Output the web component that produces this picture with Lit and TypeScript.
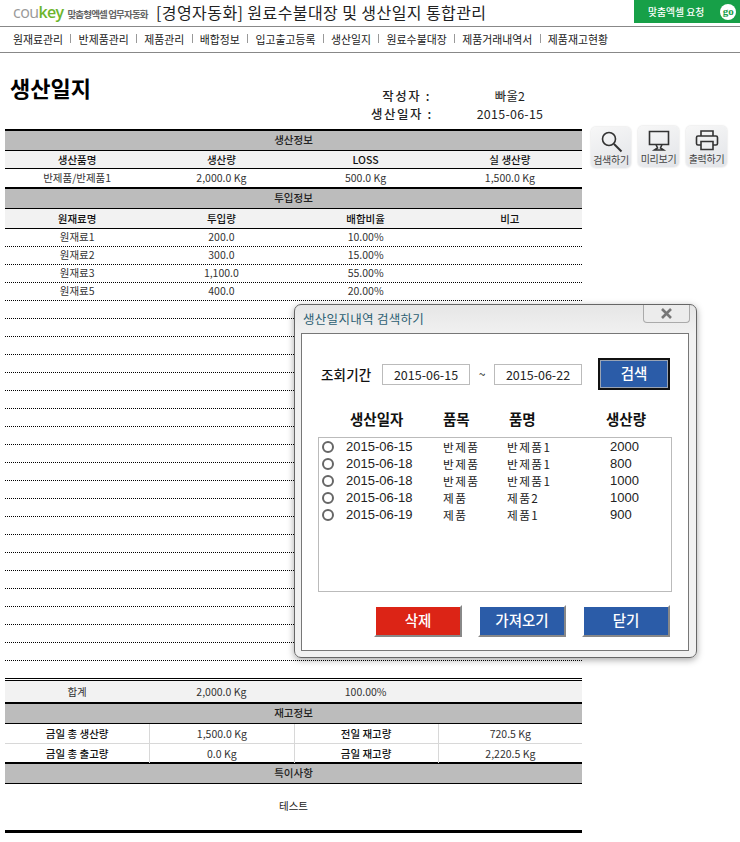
import { LitElement, html, css } from "lit";
import { customElement } from "lit/decorators.js";

const NAV = ["원재료관리","반제품관리","제품관리","배합정보","입고출고등록","생산일지","원료수불대장","제품거래내역서","제품재고현황"];
const MATS = [["원재료1","200.0","10.00%"],["원재료2","300.0","15.00%"],["원재료3","1,100.0","55.00%"],["원재료5","400.0","20.00%"]];
const LIST = [
  ["2015-06-15","반제품","반제품1","2000"],
  ["2015-06-18","반제품","반제품1","800"],
  ["2015-06-18","반제품","반제품1","1000"],
  ["2015-06-18","제품","제품2","1000"],
  ["2015-06-19","제품","제품1","900"],
];

@customElement("app-root")
export class AppRoot extends LitElement {
  static styles = css`
    :host { display:block; position:relative; width:740px; height:842px; overflow:hidden; background:#fff; color:#111;
      font-family:"Noto Sans CJK KR","Liberation Sans",sans-serif; font-size:10px; }
    * { box-sizing:border-box; }
    .top { height:27px; border-bottom:1px solid #888; display:flex; align-items:flex-start; }
    .logo { display:flex; align-items:baseline; width:143px; margin-left:13px; height:24px; padding-top:1px; white-space:nowrap; }
    .cou { font:500 16px/22px "Open Sans","Liberation Sans",sans-serif; letter-spacing:-.5px; color:#999; }
    .key { font:600 16px/22px "Open Sans","Liberation Sans",sans-serif; letter-spacing:-.7px; color:#6db52c; }
    .slogan { font-size:9.5px; font-weight:700; color:#666; letter-spacing:-.85px; margin-left:4px; line-height:22px; }
    .apptitle { font-size:16px; line-height:25px; color:#222; letter-spacing:.42px; white-space:nowrap; }
    .req { margin-left:auto; width:106px; height:23px; background:#17a048; color:#fff; display:flex; align-items:center; padding-left:14px; font-size:9.8px; font-weight:500; white-space:nowrap; }
    .go { width:16px; height:16px; border-radius:50%; background:#fff; color:#17a048; margin-left:16px; font:700 11px/15px "Liberation Serif",serif; text-align:center; }
    nav { height:26px; border-bottom:1px solid #888; display:flex; align-items:center; padding:0 0 2px 13px; white-space:nowrap; font-size:10.9px; color:#222; }
    .sep { width:1px; height:9px; background:#999; margin:0 7.25px; }
    .head { height:76px; display:flex; }
    h1 { margin:0; font-size:22px; line-height:30px; font-weight:700; color:#000; padding:19px 0 0 10px; width:371px; }
    .meta { padding-top:34px; display:grid; grid-template-columns:60px 158px; grid-auto-rows:18px; font-size:12.4px; line-height:18px; color:#222; align-content:start; }
    .meta b { font-weight:500; text-align:right; white-space:nowrap; letter-spacing:1.6px; }
    .meta span { text-align:center; letter-spacing:.3px; }
    .main { display:flex; margin-left:5px; }
    .sheet { width:577px; border-bottom:3px solid #000; }
    .band { height:20px; background:#bcbcbc; border-top:1px solid #000; border-bottom:1px solid #000; text-align:center; font-size:10.5px; font-weight:500; line-height:17px; color:#222; }
    .band.first { height:22px; border-top-width:2px; }
    .band.thick { height:22px; border-top-width:2px; }
    .band.thin { height:20px; border-top:0; }
    .r { display:grid; grid-template-columns:repeat(4,1fr); text-align:center; white-space:nowrap; }
    .r > div { line-height:17px; }
    .hd { height:18px; background:#f2f2f2; border-bottom:1px solid #000; font-weight:500; font-size:10.5px; }
    .hd.tall { height:20px; }
    .hd.tall > div { line-height:20px; }
    .val { height:18px; font-size:10.5px; color:#333; }
    .dot { height:18px; border-bottom:1px dotted #000; font-size:10.5px; color:#333; }
    .r.dot > div { line-height:16px; }
    .spacer { height:17px; }
    .dbl { height:3px; border-top:1px solid #000; border-bottom:1px solid #000; }
    .total { height:23px; background:#f2f2f2; font-size:10.5px; color:#333; border-bottom:2px solid #000; }
    .r.total > div { line-height:21px; }
    .stock { height:20px; border-bottom:1px solid #d8d8d8; font-size:10.5px; color:#333; }
    .stock.last { border-bottom:0; height:18px; }
    .r.stock > div { line-height:19px; border-left:1px solid #d8d8d8; }
    .r.stock > div:first-child { border-left:0; }
    .stock .k { font-weight:500; color:#111; }
    .note { height:46px; text-align:center; font-size:10.5px; line-height:44px; color:#222; }
    .tools { display:flex; margin:-3px 0 0 9px; align-items:flex-start; }
    .tool { width:41px; height:41px; margin-right:7px; border-radius:5px; background:linear-gradient(160deg,#f7f7f7,#e2e4e8); box-shadow:0 0 2px #ccc; display:flex; flex-direction:column; align-items:center; padding-top:3px; font-size:10px; line-height:12px; color:#444; white-space:nowrap; letter-spacing:-.3px; }
    .tool svg { display:block; width:28px; height:23px; margin-bottom:1px; }
    .tool.first { margin-top:1px; width:40px; }
    .dlg { position:absolute; left:294px; top:304px; width:403px; height:354px; border:1px solid #666; border-radius:7px; background:linear-gradient(#e6e6e6,#f1f1f1 30px); box-shadow:0 2px 7px rgba(0,0,0,.35); }
    .cap { height:28px; display:flex; justify-content:space-between; align-items:flex-start; padding:0 6px 0 8px; }
    .cap span { font-size:12.5px; line-height:27px; color:#2d5f73; letter-spacing:.3px; }
    .close { width:47px; height:18px; border:1px solid #aaa; border-top:0; border-radius:0 0 4px 4px; background:#ececec; display:flex; align-items:center; justify-content:center; }
    .close svg { width:13px; height:11px; display:block; }
    .panel { margin:0 7px 0 6px; height:318px; background:#fff; border:1px solid #777; padding-top:24px; }
    .search { display:flex; align-items:center; height:32px; padding-left:19px; }
    .search label { width:61px; font-size:13.5px; font-weight:500; color:#111; white-space:nowrap; letter-spacing:.2px; line-height:18px; }
    .date { width:88px; height:21px; border:1px solid #bbb; font-size:12.5px; line-height:19px; text-align:center; color:#222; }
    .tilde { width:24px; text-align:center; font-size:12px; line-height:18px; }
    .sbtn { margin-left:16px; width:72px; height:32px; background:#2b5ca8; border:2px solid #111; box-shadow:inset 0 0 0 1px #9aa4b4; color:#fff; font-size:14.5px; font-weight:500; text-align:center; line-height:26px; }
    .cols { display:grid; grid-template-columns:93px 66px 97px 50px; margin:20px 0 0 48px; height:17px; font-size:14.5px; font-weight:700; line-height:17px; color:#111; white-space:nowrap; }
    .box { margin:10px 0 0 16px; width:354px; height:155px; border:1px solid #bbb; padding-left:3px; }
    .li { display:grid; grid-template-columns:24px 97px 64px 103px 60px; height:17px; align-items:center; font-size:11.7px; line-height:16px; color:#222; white-space:nowrap; letter-spacing:1.4px; }
    .num { font-family:"Liberation Sans",sans-serif; font-size:13px; letter-spacing:0; }
    .radio { width:12px; height:12px; border-radius:50%; border:2px solid #666; background:#fff; }
    .btns { display:flex; justify-content:flex-end; gap:16px; margin-top:13px; padding-right:18px; }
    .btn { width:88px; height:32px; border:2px solid; border-color:#fff #888 #888 #fff; background:#2b5ca8; color:#fff; font-size:14.5px; font-weight:500; text-align:center; line-height:26px; }
    .btn.red { background:#dc2416; }
  `;

  render() {
    const empty = Array.from({ length: 20 });
    return html`
      <div class="top">
        <div class="logo"><span class="cou">cou</span><span class="key">key</span><span class="slogan">맞춤형엑셀 업무자동화</span></div>
        <div class="apptitle">[경영자동화] 원료수불대장 및 생산일지 통합관리</div>
        <div class="req">맞춤엑셀 요청<span class="go">go</span></div>
      </div>
      <nav>${NAV.map((n, i) => html`${i ? html`<i class="sep"></i>` : ""}<span>${n}</span>`)}</nav>
      <div class="head">
        <h1>생산일지</h1>
        <div class="meta">
          <b>작성자 :</b><span>빠울2</span>
          <b>생산일자 :</b><span>2015-06-15</span>
        </div>
      </div>
      <div class="main">
        <div class="sheet">
          <div class="band first">생산정보</div>
          <div class="r hd"><div>생산품명</div><div>생산량</div><div>LOSS</div><div>실 생산량</div></div>
          <div class="r val"><div>반제품/반제품1</div><div>2,000.0 Kg</div><div>500.0 Kg</div><div>1,500.0 Kg</div></div>
          <div class="band thick">투입정보</div>
          <div class="r hd tall"><div>원재료명</div><div>투입량</div><div>배합비율</div><div>비고</div></div>
          ${MATS.map(m => html`<div class="r dot"><div>${m[0]}</div><div>${m[1]}</div><div>${m[2]}</div><div></div></div>`)}
          ${empty.map(() => html`<div class="r dot"></div>`)}
          <div class="spacer"></div>
          <div class="dbl"></div>
          <div class="r total"><div>합계</div><div>2,000.0 Kg</div><div>100.00%</div><div></div></div>
          <div class="band thin">재고정보</div>
          <div class="r stock"><div class="k">금일 총 생산량</div><div>1,500.0 Kg</div><div class="k">전일 재고량</div><div>720.5 Kg</div></div>
          <div class="r stock last"><div class="k">금일 총 출고량</div><div>0.0 Kg</div><div class="k">금일 재고량</div><div>2,220.5 Kg</div></div>
          <div class="band thick">특이사항</div>
          <div class="note">테스트</div>
        </div>
        <div class="tools">
          <div class="tool first">
            <svg viewBox="0 0 28 23" fill="none" stroke="#333" stroke-width="1.6"><circle cx="12" cy="9" r="6.5"/><path d="M17 14l7.5 7.5" stroke-width="2"/></svg>
            검색하기
          </div>
          <div class="tool">
            <svg viewBox="0 0 28 23" fill="none" stroke="#333" stroke-width="1.6"><path d="M4.5 2.5h19v13h-19z"/><path d="M11 15.5l1.5 3.5-3 2h9l-3-2 1.5-3.5"/></svg>
            미리보기
          </div>
          <div class="tool">
            <svg viewBox="0 0 28 23" fill="none" stroke="#333" stroke-width="1.6"><path d="M8 7V2h12v5"/><path d="M8 16H5a1.5 1.5 0 0 1-1.5-1.5v-6A1.5 1.5 0 0 1 5 7h18a1.5 1.5 0 0 1 1.5 1.5v6A1.5 1.5 0 0 1 23 16h-3"/><path d="M8 12.5h12v8H8z"/></svg>
            출력하기
          </div>
        </div>
      </div>
      <div class="dlg">
        <div class="cap">
          <span>생산일지내역 검색하기</span>
          <div class="close"><svg viewBox="0 0 13 11"><path d="M2 1l9 9M11 1l-9 9" stroke="#777" stroke-width="2.6" fill="none"/></svg></div>
        </div>
        <div class="panel">
          <div class="search">
            <label>조회기간</label>
            <div class="date">2015-06-15</div>
            <div class="tilde">~</div>
            <div class="date">2015-06-22</div>
            <div class="sbtn">검색</div>
          </div>
          <div class="cols"><div>생산일자</div><div>품목</div><div>품명</div><div>생산량</div></div>
          <div class="box">
            ${LIST.map(l => html`<div class="li"><i class="radio"></i><span class="num">${l[0]}</span><span>${l[1]}</span><span>${l[2]}</span><span class="num">${l[3]}</span></div>`)}
          </div>
          <div class="btns">
            <div class="btn red">삭제</div>
            <div class="btn">가져오기</div>
            <div class="btn">닫기</div>
          </div>
        </div>
      </div>
    `;
  }
}
